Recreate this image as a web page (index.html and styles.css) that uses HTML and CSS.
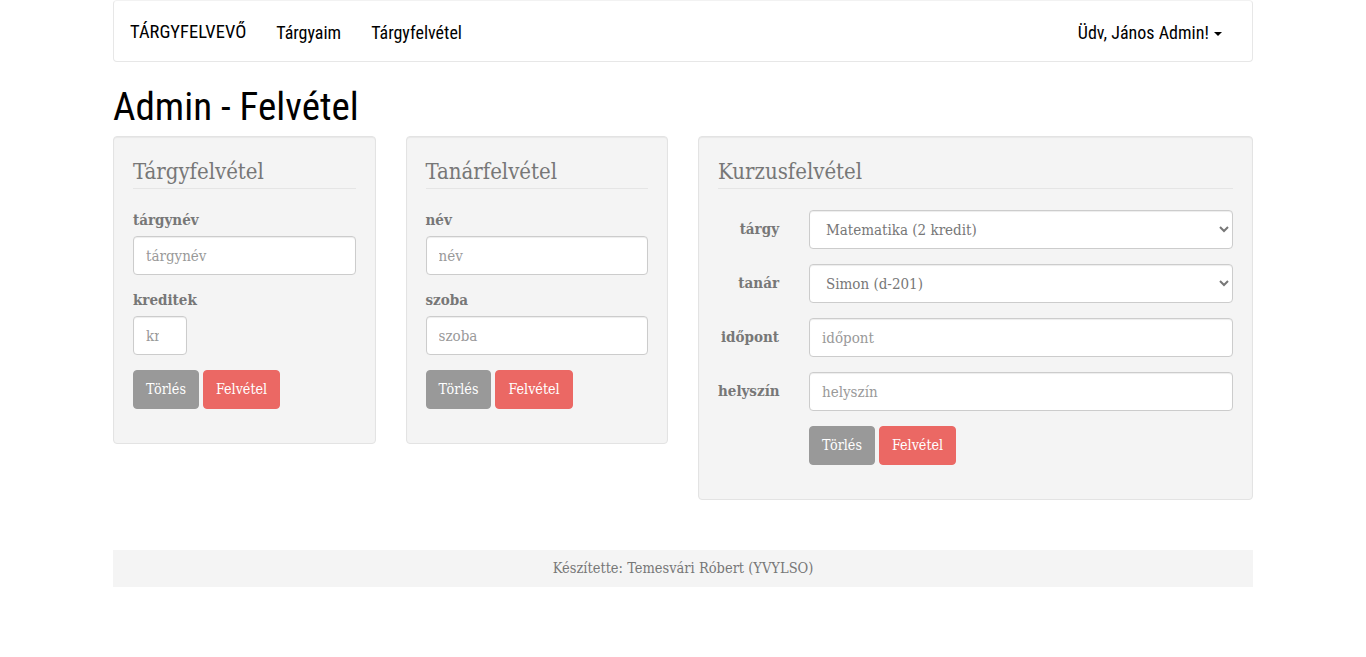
FILE: index.html
```html
<!DOCTYPE html>
<html lang="hu">
<head>
<meta charset="utf-8">
<title>Admin - Felvétel</title>
<link rel="stylesheet" href="styles.css">
</head>
<body>
<div class="container">
  <nav class="navbar">
    <a class="brand" href="#">TÁRGYFELVEVŐ</a>
    <a class="nav-link" href="#">Tárgyaim</a>
    <a class="nav-link" href="#">Tárgyfelvétel</a>
    <a class="nav-link nav-right" href="#">Üdv, János Admin! <span class="caret"></span></a>
  </nav>

  <h1 class="page-title">Admin - Felvétel</h1>

  <div class="row">
    <div class="well">
      <form>
        <div class="legend">Tárgyfelvétel</div>
        <div class="form-group">
          <label class="label">tárgynév</label>
          <input class="input" type="text" placeholder="tárgynév">
        </div>
        <div class="form-group">
          <label class="label">kreditek</label>
          <input class="input input-small" type="number" placeholder="kreditek">
        </div>
        <div class="form-group buttons">
          <button type="button" class="btn btn-default">Törlés</button>
          <button type="button" class="btn btn-danger">Felvétel</button>
        </div>
      </form>
    </div>

    <div class="well">
      <form>
        <div class="legend">Tanárfelvétel</div>
        <div class="form-group">
          <label class="label">név</label>
          <input class="input" type="text" placeholder="név">
        </div>
        <div class="form-group">
          <label class="label">szoba</label>
          <input class="input" type="text" placeholder="szoba">
        </div>
        <div class="form-group buttons">
          <button type="button" class="btn btn-default">Törlés</button>
          <button type="button" class="btn btn-danger">Felvétel</button>
        </div>
      </form>
    </div>

    <div class="well">
      <form>
        <div class="legend">Kurzusfelvétel</div>
        <div class="hgroup">
          <label class="label hlabel">tárgy</label>
          <select class="input select">
            <option>Matematika (2 kredit)</option>
          </select>
        </div>
        <div class="hgroup">
          <label class="label hlabel">tanár</label>
          <select class="input select">
            <option>Simon (d-201)</option>
          </select>
        </div>
        <div class="hgroup">
          <label class="label hlabel">időpont</label>
          <input class="input" type="text" placeholder="időpont">
        </div>
        <div class="hgroup">
          <label class="label hlabel">helyszín</label>
          <input class="input" type="text" placeholder="helyszín">
        </div>
        <div class="hgroup">
          <div class="hbuttons">
            <button type="button" class="btn btn-default">Törlés</button>
            <button type="button" class="btn btn-danger">Felvétel</button>
          </div>
        </div>
      </form>
    </div>
  </div>

  <footer class="footer">Készítette: Temesvári Róbert (YVYLSO)</footer>
</div>
</body>
</html>
```

FILE: styles.css
```css
* {
  box-sizing: border-box;
}

html, body {
  margin: 0;
  padding: 0;
  background: #fff;
}

body {
  font-family: "DejaVu Serif Condensed", "DejaVu Serif", "Liberation Serif", serif;
  font-size: 15px;
  line-height: 21px;
  color: #777;
}

.container {
  width: 1140px;
  margin: 0 auto;
}

/* Navbar */
.navbar {
  display: flex;
  align-items: center;
  height: 62px;
  border: 1px solid #e7e7e7;
  border-top-color: #f2f2f2;
  border-radius: 4px;
  background: #fff;
  padding: 3px 15px 0 0;
  font-family: "Roboto Condensed", "DejaVu Sans Condensed", "DejaVu Sans", sans-serif;
  font-size: 18px;
}

.brand,
.nav-link {
  color: #000;
  text-decoration: none;
  padding: 0 15px;
  line-height: 21px;
}

.brand {
  padding-left: 16px;
  font-size: 18.5px;
}

.nav-right {
  margin-left: auto;
}

.caret {
  display: inline-block;
  width: 0;
  height: 0;
  margin-left: 1px;
  vertical-align: middle;
  border-top: 4px solid #000;
  border-left: 4px solid transparent;
  border-right: 4px solid transparent;
}

/* Title */
.page-title {
  margin: 21px 0 7px;
  padding-top: 3px;
  font-family: "Roboto Condensed", "DejaVu Sans Condensed", "DejaVu Sans", sans-serif;
  font-weight: 400;
  font-size: 39px;
  line-height: 43px;
  color: #000;
}

/* Grid */
.row {
  display: grid;
  grid-template-columns: 262.5px 262.5px 555px;
  column-gap: 30px;
  align-items: start;
}

.well {
  background: #f4f4f4;
  border: 1px solid #e3e3e3;
  border-radius: 4px;
  padding: 19px;
  margin-bottom: 20px;
  box-shadow: inset 0 1px 1px rgba(0, 0, 0, 0.05);
}

.legend {
  font-size: 22px;
  line-height: 32px;
  color: #777;
  border-bottom: 1px solid #e5e5e5;
  margin-bottom: 21px;
}

.form-group {
  margin-bottom: 15px;
}

.label {
  display: block;
  font-weight: bold;
  margin-bottom: 5px;
  color: #777;
}

.input {
  display: block;
  width: 100%;
  height: 39px;
  padding: 8px 12px;
  font-family: inherit;
  font-size: 15px;
  line-height: 21px;
  color: #777;
  background: #fff;
  border: 1px solid #ccc;
  border-radius: 4px;
  box-shadow: inset 0 1px 1px rgba(0, 0, 0, 0.075);
}

.input::placeholder {
  color: #999;
}

.input-small {
  width: 54px;
}

.buttons {
  display: flex;
  gap: 4px;
}

.btn {
  font-family: inherit;
  font-size: 14.2px;
  line-height: 21px;
  padding: 8px 12px;
  border: 1px solid transparent;
  border-radius: 4px;
  color: #fff;
  cursor: pointer;
}

.btn-default {
  background: #999;
  border-color: #999;
}

.btn-danger {
  background: #eb6864;
  border-color: #eb6864;
}

/* Horizontal form */
.hgroup {
  display: grid;
  grid-template-columns: 61px 1fr;
  column-gap: 30px;
  margin-bottom: 15px;
}

.hlabel {
  text-align: right;
  padding-top: 9px;
  margin-bottom: 0;
  white-space: nowrap;
}

.hbuttons {
  grid-column: 2;
  display: flex;
  gap: 4px;
}

/* Footer */
.footer {
  margin-top: 30px;
  background: #f4f4f4;
  padding: 8px;
  text-align: center;
  font-size: 14.5px;
  color: #777;
}
```
